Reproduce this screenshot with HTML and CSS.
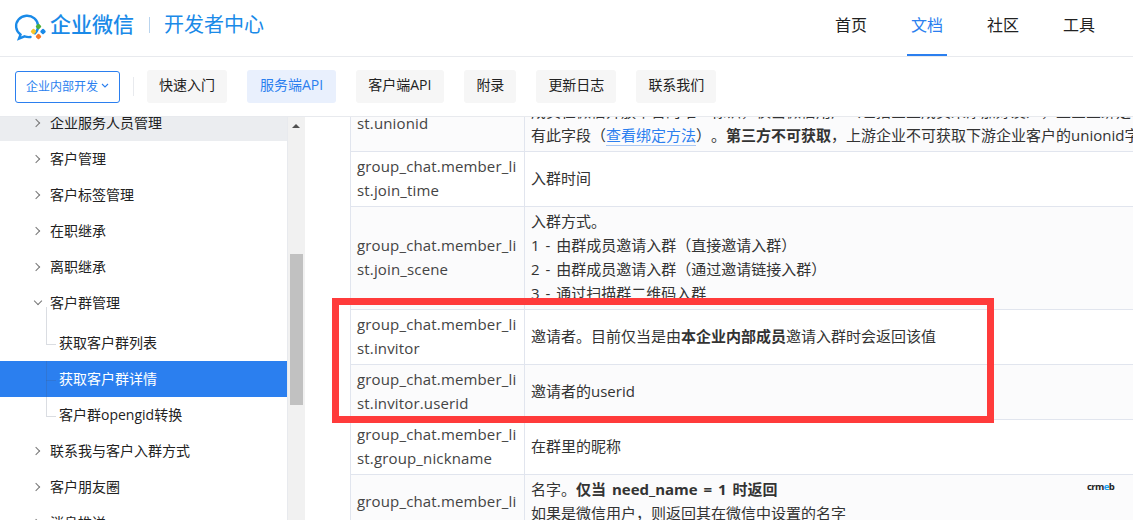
FILE: index.html
```html
<!DOCTYPE html>
<html lang="zh-CN">
<head>
  <title>企业微信开发者中心</title>
  <meta charset="utf-8">
  <link rel="stylesheet" href="styles.css">
</head>
<body>
  <header class="top_bar">
    <svg class="logo_icon" width="34" height="30" viewBox="0 0 34 30" aria-hidden="true">
      <path d="M21 21.5 A11 10.5 0 1 0 6.5 22.6 L5 26.6 L10.6 24.4 A12.5 11.5 0 0 0 16.5 25" fill="none" stroke="#1a8ae8" stroke-width="2.4" stroke-linecap="round"/>
      <rect x="22.3" y="12.3" width="4.4" height="4.4" rx="1" transform="rotate(45 24.5 14.5)" fill="#4caf3c"/>
      <rect x="26.8" y="17.3" width="4.4" height="4.4" rx="1" transform="rotate(45 29 19.5)" fill="#1a8ae8"/>
      <rect x="22.3" y="22.3" width="4.4" height="4.4" rx="1" transform="rotate(45 24.5 24.5)" fill="#f5792a"/>
      <rect x="17.3" y="17.3" width="4.4" height="4.4" rx="1" transform="rotate(45 19.5 19.5)" fill="#f7c62b"/>
    </svg>
    <span class="logo_name">企业微信</span>
    <span class="logo_line"></span>
    <span class="logo_sub">开发者中心</span>
    <nav class="top_nav">
      <a>首页</a>
      <a class="on">文档</a>
      <a>社区</a>
      <a>工具</a>
    </nav>
  </header>

  <div class="sub_bar">
    <div class="scope_btn">企业内部开发
      <svg width="8" height="5" viewBox="0 0 8 5" aria-hidden="true"><path d="M1 1 L4 4 L7 1" fill="none" stroke="#2b7fef" stroke-width="1.1"/></svg>
    </div>
    <span class="sub_line"></span>
    <a class="sub_btn">快速入门</a>
    <a class="sub_btn on wide">服务端API</a>
    <a class="sub_btn mid">客户端API</a>
    <a class="sub_btn">附录</a>
    <a class="sub_btn">更新日志</a>
    <a class="sub_btn">联系我们</a>
  </div>

  <main class="main_wrap">
    <aside class="side_wrap">
      <ul class="side_list">
        <li class="side_item hover clip"><i class="arrow"></i>企业服务人员管理</li>
        <li class="side_item"><i class="arrow"></i>客户管理</li>
        <li class="side_item"><i class="arrow"></i>客户标签管理</li>
        <li class="side_item"><i class="arrow"></i>在职继承</li>
        <li class="side_item"><i class="arrow"></i>离职继承</li>
        <li class="side_item"><i class="arrow open"></i>客户群管理</li>
        <li class="side_children">
          <div class="side_child first">获取客户群列表</div>
          <div class="side_child active">获取客户群详情</div>
          <div class="side_child">客户群opengid转换</div>
        </li>
        <li class="side_item"><i class="arrow"></i>联系我与客户入群方式</li>
        <li class="side_item"><i class="arrow"></i>客户朋友圈</li>
        <li class="side_item"><i class="arrow"></i>消息推送</li>
      </ul>
      <div class="side_scroll">
        <span class="scroll_up"></span>
        <span class="scroll_thumb"></span>
      </div>
    </aside>

    <section class="doc_wrap">
      <table class="doc_table">
        <colgroup>
          <col class="col_name">
          <col class="col_desc">
        </colgroup>
        <tr>
          <td class="name">group_chat.member_li<br>st.unionid</td>
          <td>外部联系人在微信开放平台的唯一身份标识（微信unionid），通过此字段企业可将外部联系人与公众号/小程序用户关联起来。<br>成员在微信开放平台的唯一标识，仅当微信用户（包括企业成员未添加好友），且企业绑定了微信开发者ID<br>有此字段（<a class="link">查看绑定方法</a>）。<b>第三方不可获取</b>，上游企业不可获取下游企业客户的unionid字段</td>
        </tr>
        <tr>
          <td class="name">group_chat.member_li<br>st.join_time</td>
          <td>入群时间</td>
        </tr>
        <tr>
          <td class="name">group_chat.member_li<br>st.join_scene</td>
          <td>入群方式。<br>1 - 由群成员邀请入群（直接邀请入群）<br>2 - 由群成员邀请入群（通过邀请链接入群）<br>3 - 通过扫描群二维码入群</td>
        </tr>
        <tr>
          <td class="name">group_chat.member_li<br>st.invitor</td>
          <td>邀请者。目前仅当是由<b>本企业内部成员</b>邀请入群时会返回该值</td>
        </tr>
        <tr>
          <td class="name">group_chat.member_li<br>st.invitor.userid</td>
          <td>邀请者的userid</td>
        </tr>
        <tr>
          <td class="name">group_chat.member_li<br>st.group_nickname</td>
          <td>在群里的昵称</td>
        </tr>
        <tr>
          <td class="name">group_chat.member_li<br>st.name</td>
          <td>名字。<b>仅当 need_name = 1 时返回</b><br>如果是微信用户，则返回其在微信中设置的名字<br>如果是企业微信联系人，则返回其设置对外展示的别名或实名</td>
        </tr>
      </table>
    </section>
  </main>

  <div class="mark_box"></div>
  <div class="water_mark">cr<span class="dot">m</span><span class="blue">e</span>b</div>
</body>
</html>
```

FILE: styles.css
```css
* {
  box-sizing: border-box;
  margin: 0; padding: 0;
}
html, body {
  height: 100%;
  overflow: hidden;
}
body {
  display: flex;
  flex-direction: column;
  font-family: "Open Sans", "Noto Sans CJK SC", sans-serif;
  text-spacing-trim: space-all;
  color: #333;
  background: white;
}

/* header */
.top_bar {
  flex: none;
  display: flex;
  align-items: center;
  height: 57px;
  padding-left: 14px;
  border-bottom: 1px solid #e8eaee;
}
.logo_icon {
  margin: -2px 2px 0 0;
}
.logo_name {
  padding-bottom: 7px;
  font-size: 21px;
  font-weight: 500;
  color: #1a8ae8;
  line-height: 1;
}
.logo_line {
  width: 1px; height: 16px;
  margin: -6px 14px 0 15px;
  background: #b9d4ee;
}
.logo_sub {
  padding-bottom: 7px;
  font-size: 20px;
  color: #1a8ae8;
  line-height: 1;
}
.top_nav {
  display: flex;
  align-self: stretch;
  margin-left: auto;
  margin-right: 34px;
  gap: 36px;
}
.top_nav a {
  width: 40px;
  font-size: 16px;
  line-height: 50px;
  text-align: center;
  color: #222;
}
.top_nav a.on {
  color: #2b7fef;
  height: 56px;
  border-bottom: 2px solid #2b7fef;
}

.sub_bar {
  flex: none;
  display: flex;
  align-items: center;
  height: 60px;
  padding: 0 0 0 15px;
  border-bottom: 1px solid #e8eaee;
  gap: 20px;
}
.scope_btn {
  display: flex;
  align-items: center;
  justify-content: center;
  gap: 3px;
  width: 105px; height: 32px;
  margin-right: -7px;
  padding-bottom: 2px;
  border: 1px solid #2b7fef;
  border-radius: 3px;
  font-size: 12px;
  color: #2b7fef;
}
.sub_line {
  width: 1px; height: 19px;
  margin-right: -7px;
  background: #e8eaee;
}
.sub_btn {
  height: 33px;
  padding: 0 12px;
  border-radius: 3px;
  background: #f6f6f6;
  font-size: 14px;
  line-height: 29px;
  color: #222;
}
.sub_btn.wide {
  padding: 0 13px;
}
.sub_btn.mid {
  padding: 0 13px 0 12px;
}
.sub_btn.on {
  background: #e9f0fd;
  color: #2b7fef;
}

/* main */
.main_wrap {
  flex: 1;
  display: flex;
  min-height: 0;
  overflow: hidden;
}
.side_wrap {
  flex: none;
  display: flex;
  width: 305px;
}
.side_list {
  width: 288px;
  border-right: 1px solid #e8eaee;
  list-style: none;
  overflow: hidden;
}
.side_item {
  display: flex;
  align-items: center;
  height: 36px;
  padding: 0 0 2px 50px;
  position: relative;
  font-size: 14px;
  color: #222;
}
.side_item.clip {
  height: 24px;
  align-items: flex-end;
  line-height: 18px;
  padding-bottom: 9px;
  overflow: hidden;
}
.side_item.hover {
  background: #ebedf0;
}
.arrow {
  position: absolute;
  left: 33px; top: 15px;
  width: 6px; height: 6px;
  border-top: 1px solid #777;
  border-right: 1px solid #777;
  transform: rotate(45deg);
}
.side_item.clip .arrow {
  top: 3px;
}
.arrow.open {
  left: 35px; top: 13px;
  transform: rotate(135deg);
}
.side_children {
  padding-top: 4px;
}
.side_child {
  position: relative;
  height: 36px;
  padding-left: 59px;
  font-size: 14px;
  line-height: 36px;
  color: #222;
}
.side_child::before {
  content: '';
  position: absolute;
  left: 46px; top: 0;
  width: 9px; height: 19px;
  border-left: 1px solid rgba(70, 85, 110, .2);
  border-bottom: 1px solid rgba(70, 85, 110, .2);
}
.side_child.first::before {
  top: -18px;
  height: 37px;
}
.side_child.active {
  background: #2b7fef;
  color: white;
}
.side_child + .side_child::after {
  content: '';
  position: absolute;
  left: 46px; top: 19px;
  height: 17px;
  border-left: 1px solid rgba(70, 85, 110, .2);
}
.side_child:last-child::after {
  display: none;
}
.side_scroll {
  position: relative;
  flex: none;
  width: 17px;
  background: #f1f1f1;
}
.scroll_up {
  position: absolute;
  left: 4px; top: 7px;
  border: 4px solid transparent;
  border-top: 0;
  border-bottom: 4px solid #505050;
}
.scroll_thumb {
  position: absolute;
  left: 2px; top: 137px;
  width: 13px; height: 151px;
  background: #c1c1c1;
}

.doc_wrap {
  flex: 1;
  min-width: 0;
  overflow: hidden;
  padding-left: 45px;
}
.doc_table {
  width: 1200px;
  margin-top: -45px;
  table-layout: fixed;
  border-collapse: collapse;
  font-size: 15px;
  line-height: 24px;
  word-spacing: 2px;
  color: #333;
}
.col_name {
  width: 174px;
}
.doc_table tr:nth-child(odd) {
  background: #fbfbfc;
}
.doc_table td {
  padding: 2px 6px 4px;
  border: 1px solid #e1e5ee;
  white-space: nowrap;
  vertical-align: middle;
}
.doc_table td.name {
  letter-spacing: .15px;
  color: #444;
}
.link {
  color: #2b7fef;
  border-bottom: 1px solid #a9c8f5;
}

/* red frame and watermark */
.mark_box {
  position: absolute;
  left: 332px; top: 298px;
  width: 662px; height: 125px;
  border: 7px solid #ff3b3b;
}
.water_mark {
  position: absolute;
  left: 1087px; top: 479px;
  font-size: 9.5px;
  font-weight: 700;
  line-height: 16px;
  letter-spacing: -0.6px;
  color: #222;
}
.water_mark .blue {
  color: #1aa0ee;
}
```
